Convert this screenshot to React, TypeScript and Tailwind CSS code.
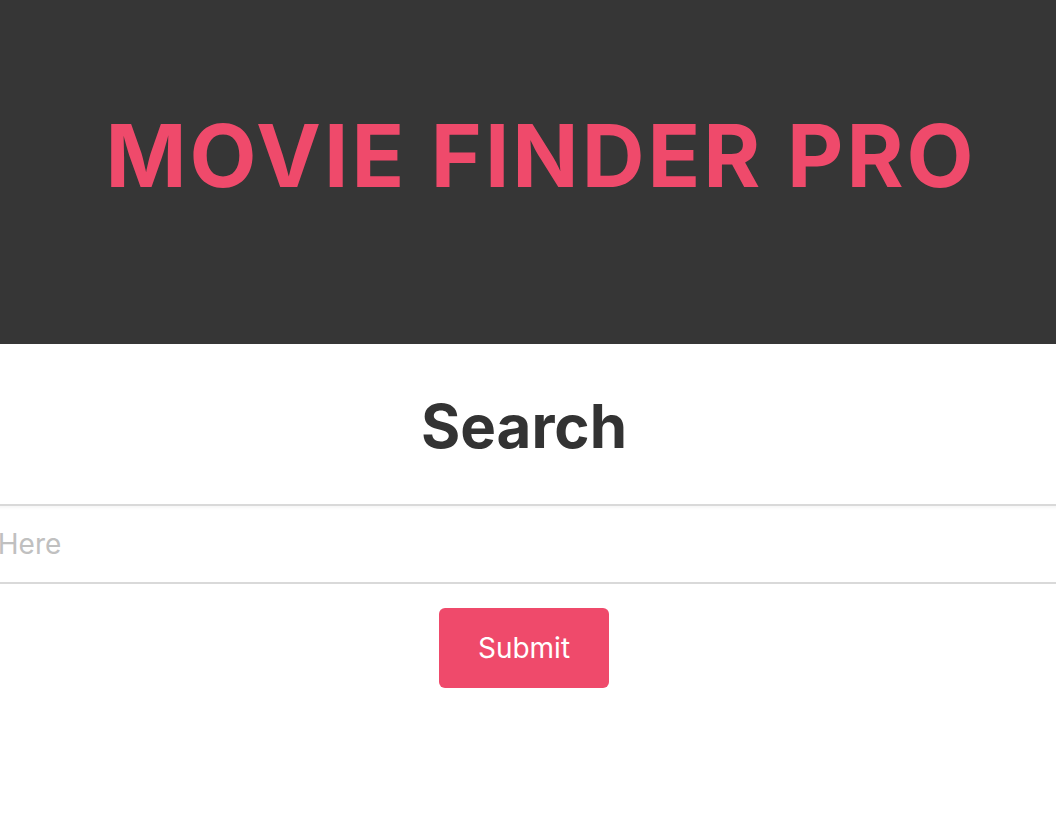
export default function App() {
  return (
    <div className="w-[1056px] h-[824px] overflow-hidden bg-white" style={{ fontFamily: "Inter, 'Noto Sans', sans-serif" }}>
      <header className="h-[344px] bg-[#363636] flex items-center justify-center">
        <h1 className="text-[87px] font-bold text-[#ef4a6b] leading-none tracking-[3px] pl-[26px] pb-[34px]">MOVIE FINDER PRO</h1>
      </header>
      <section className="flex flex-col items-center">
        <h2 className="mt-[52px] pr-[8px] text-[60px] font-bold text-[#333333] leading-none">Search</h2>
        <div className="mt-[48px] w-full">
          <input
            type="text"
            placeholder="Search Here"
            className="block ml-[-115px] w-[1250px] h-[80px] border-y-2 border-[#d9d9d9] bg-white px-[12px] text-[28px] text-[#333] placeholder:text-[#c0c0c0] shadow-[inset_0_2px_3px_rgba(0,0,0,0.04)] outline-none"
          />
        </div>
        <button className="mt-[24px] mr-[8px] w-[170px] h-[80px] rounded-[6px] bg-[#ef4a6b] text-white text-[28px]">Submit</button>
      </section>
    </div>
  );
}
